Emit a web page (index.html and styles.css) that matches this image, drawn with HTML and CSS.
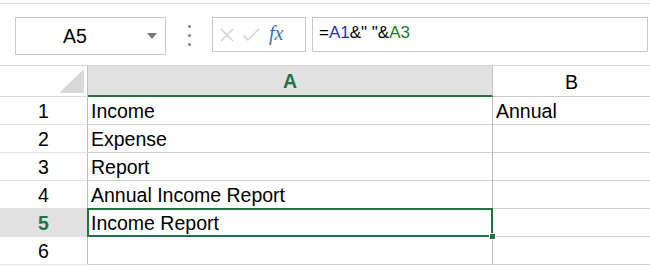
FILE: index.html
```html
<!DOCTYPE html>
<html lang="en">
<head>
    <meta charset="UTF-8">
    <title>Sheet</title>
    <link rel="stylesheet" href="styles.css">
</head>
<body>
    <div class="toolbar">
        <div class="namebox">
            <span class="name">A5</span>
            <span class="arrow"></span>
        </div>
        <div class="dots"><i></i><i></i><i></i></div>
        <div class="fxbox">
            <svg width="16" height="16" viewBox="0 0 16 16" class="ico"><path d="M2 2L14 14M14 2L2 14" stroke="#cfcfcf" stroke-width="1.4" fill="none"/></svg>
            <svg width="18" height="16" viewBox="0 0 18 16" class="ico"><path d="M1 8L6 13L17 2" stroke="#cfcfcf" stroke-width="1.4" fill="none"/></svg>
            <span class="fx">fx</span>
        </div>
        <div class="formula">=<span class="ref1">A1</span>&amp;" "&amp;<span class="ref3">A3</span></div>
    </div>
    <div class="sheet">
        <div class="corner"><span class="tri"></span></div>
        <div class="colhead active">A</div>
        <div class="colhead">B</div>

        <div class="rowhead">1</div>
        <div class="cell">Income</div>
        <div class="cell">Annual</div>

        <div class="rowhead">2</div>
        <div class="cell">Expense</div>
        <div class="cell"></div>

        <div class="rowhead">3</div>
        <div class="cell">Report</div>
        <div class="cell"></div>

        <div class="rowhead">4</div>
        <div class="cell">Annual Income Report</div>
        <div class="cell"></div>

        <div class="rowhead active">5</div>
        <div class="cell selected">Income Report<span class="handle"></span></div>
        <div class="cell"></div>

        <div class="rowhead">6</div>
        <div class="cell"></div>
        <div class="cell"></div>
    </div>
</body>
</html>
```

FILE: styles.css
```css
*{
    margin: 0;
    padding: 0;
    box-sizing: border-box;
}
body{
    width: 650px;
    height: 267px;
    overflow: hidden;
    background: #fff;
    font-family: "Liberation Sans", Arial, sans-serif;
    color: #000;
}
.toolbar{
    margin-top: 3px;
    height: 63px;
    border-top: 1px solid #dcdcdc;
    border-bottom: 1px solid #d6d6d6;
    display: flex;
    align-items: flex-start;
    padding: 13px 0 0 15px;
}
.namebox{
    width: 151px;
    height: 38px;
    border: 1px solid #c9c9c9;
    display: flex;
    align-items: center;
    padding-left: 47px;
}
.name{
    font-size: 19.5px;
    width: 26px;
    padding-top: 1px;
}
.arrow{
    margin-left: 58px;
    width: 0;
    height: 0;
    border-left: 5px solid transparent;
    border-right: 5px solid transparent;
    border-top: 6px solid #7a7a7a;
}
.dots{
    width: 46px;
    display: flex;
    flex-direction: column;
    align-items: center;
    gap: 6px;
    padding-top: 8px;
}
.dots i{
    width: 3px;
    height: 3px;
    border-radius: 50%;
    background: #7f7f7f;
}
.fxbox{
    width: 94px;
    height: 35px;
    border: 1px solid #c9c9c9;
    display: flex;
    align-items: center;
    padding-left: 6px;
    gap: 7px;
}
.fx{
    font-family: "Liberation Serif", "Times New Roman", serif;
    font-style: italic;
    font-size: 20px;
    color: #3d73b8;
    margin-left: 2px;
    margin-top: -3px;
}
.formula{
    margin-left: 6px;
    width: 336px;
    height: 35px;
    border: 1px solid #c9c9c9;
    font-size: 17px;
    padding: 5px 0 0 6px;
}
.ref1{
    color: #1f2fd0;
}
.ref3{
    color: #1f7a2a;
}
.sheet{
    display: grid;
    grid-template-columns: 88px 405px 157px;
    grid-template-rows: 31px repeat(6, 28px);
}
.corner{
    border-right: 1px solid #c4c4c4;
    border-bottom: 1px solid #d8d8d8;
    display: flex;
    justify-content: flex-end;
    align-items: flex-end;
    padding: 0 3px 3px 0;
}
.tri{
    width: 25px;
    height: 24px;
    background: #d9d9d9;
    clip-path: polygon(100% 0, 100% 100%, 0 100%);
}
.colhead{
    font-size: 19.5px;
    display: flex;
    align-items: center;
    justify-content: center;
    padding-top: 2px;
    border-bottom: 1px solid #c8c8c8;
}
.colhead.active{
    background: #e1e1e1;
    color: #217346;
    font-weight: bold;
    border-right: 1px solid #c4c4c4;
    border-bottom: 2px solid #217346;
}
.rowhead{
    font-size: 19.5px;
    display: flex;
    align-items: center;
    justify-content: center;
    padding-top: 2px;
    border-right: 1px solid #bdbdbd;
    border-bottom: 1px solid #e3e3e3;
}
.rowhead.active{
    background: #e1e1e1;
    color: #217346;
    font-weight: bold;
}
.cell{
    font-size: 19.5px;
    display: flex;
    align-items: center;
    padding: 2px 0 0 3px;
    border-bottom: 1px solid #cfcfcf;
    white-space: nowrap;
}
.sheet .cell:nth-child(3n+2){
    border-right: 1px solid #bdbdbd;
}
.cell.selected{
    position: relative;
}
.cell.selected::after{
    content: "";
    position: absolute;
    left: -1px;
    top: -1px;
    right: -1px;
    bottom: -1px;
    border: 2px solid #217346;
}
.handle{
    position: absolute;
    right: -4px;
    bottom: -4px;
    width: 7px;
    height: 7px;
    background: #217346;
    border: 1px solid #fff;
    z-index: 2;
}
```
